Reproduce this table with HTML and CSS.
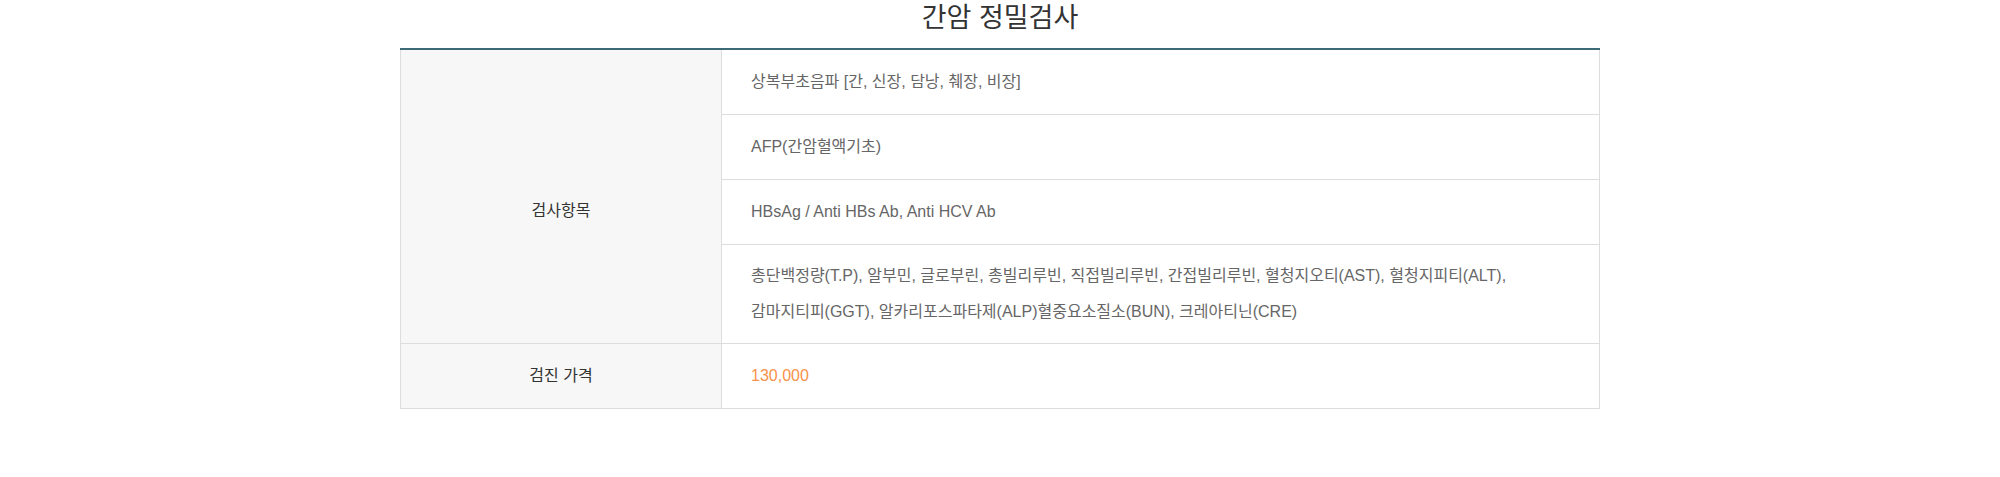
FILE: index.html
```html
<!DOCTYPE html>
<html lang="ko">
<head>
<meta charset="utf-8">
<title>간암 정밀검사</title>
<link rel="stylesheet" href="styles.css">
</head>
<body>
<div class="page">
  <h2 class="title">간암 정밀검사</h2>
  <table class="exam">
    <tbody>
      <tr>
        <th rowspan="4" class="label label-span">검사항목</th>
        <td class="value">상복부초음파 [간, 신장, 담낭, 췌장, 비장]</td>
      </tr>
      <tr>
        <td class="value">AFP(간암혈액기초)</td>
      </tr>
      <tr>
        <td class="value">HBsAg / Anti HBs Ab, Anti HCV Ab</td>
      </tr>
      <tr>
        <td class="value multi">총단백정량(T.P), 알부민, 글로부린, 총빌리루빈, 직접빌리루빈, 간접빌리루빈, 혈청지오티(AST), 혈청지피티(ALT),<br>감마지티피(GGT), 알카리포스파타제(ALP)혈중요소질소(BUN), 크레아티닌(CRE)</td>
      </tr>
      <tr>
        <th class="label">검진 가격</th>
        <td class="value price">130,000</td>
      </tr>
    </tbody>
  </table>
</div>
</body>
</html>
```

FILE: styles.css
```css
html, body {
  margin: 0;
  padding: 0;
  background: #fff;
}
body {
  font-family: "Liberation Sans", "Noto Sans CJK KR", sans-serif;
  color: #666;
}
.page {
  width: 1200px;
  margin: 0 auto;
}
.title {
  margin: 0;
  padding-top: 1px;
  height: 47px;
  font-family: "Noto Sans CJK KR", sans-serif;
  font-size: 27px;
  line-height: 30px;
  font-weight: 400;
  color: #333;
  text-align: center;
}
.exam {
  width: 1200px;
  border-collapse: collapse;
  table-layout: fixed;
}
.exam th, .exam td {
  border: 1px solid #ddd;
  font-size: 16px;
  line-height: 36px;
  padding: 14px 29px;
  text-align: left;
  vertical-align: middle;
}
.exam tr:first-child th, .exam tr:first-child td {
  border-top: 2px solid #3d6a78;
}
.exam .label {
  width: 321px;
  box-sizing: border-box;
  background: #f7f7f7;
  color: #333;
  font-weight: 400;
  text-align: center;
}
.exam .label-span {
  padding-top: 42px;
}
.exam .value {
  color: #666;
}
.exam .multi {
  padding-top: 13px;
  padding-bottom: 13px;
}
.exam .price {
  color: #f7924a;
}
```
